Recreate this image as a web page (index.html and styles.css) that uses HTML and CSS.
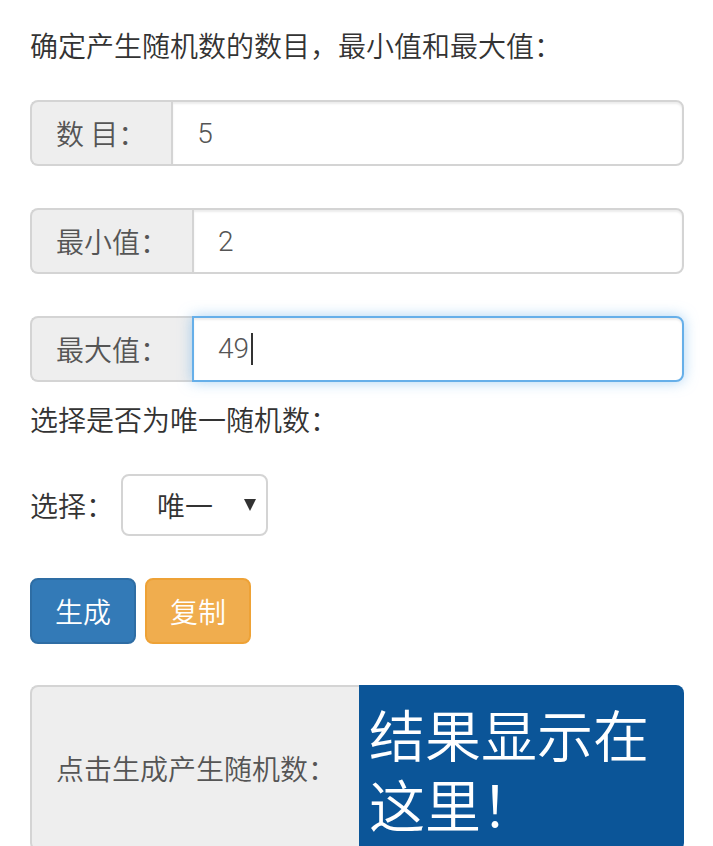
FILE: index.html
```html
<!DOCTYPE html>
<html lang="zh-CN">
<head>
<meta charset="utf-8">
<title>随机数生成</title>
<link rel="stylesheet" href="styles.css">
</head>
<body>
<div class="container">
  <p class="intro">确定产生随机数的数目，最小值和最大值：</p>

  <div class="input-group g1">
    <span class="addon">数 目：</span>
    <input class="form-control" type="text" value="5">
  </div>

  <div class="input-group g2">
    <span class="addon">最小值：</span>
    <input class="form-control" type="text" value="2">
  </div>

  <div class="input-group g3">
    <span class="addon">最大值：</span>
    <div class="form-control focused">49<span class="caret"></span></div>
  </div>

  <p class="label-line">选择是否为唯一随机数：</p>

  <div class="select-row">
    <span class="select-label">选择：</span>
    <span class="select-wrap">
      <select class="select">
        <option>唯一</option>
        <option>不唯一</option>
      </select>
    </span>
  </div>

  <div class="buttons">
    <button class="btn btn-primary" type="button">生成</button>
    <button class="btn btn-warning" type="button">复制</button>
  </div>

  <div class="result">
    <div class="result-label">点击生成产生随机数：</div>
    <div class="result-value">结果显示在这里！</div>
  </div>
</div>
</body>
</html>
```

FILE: styles.css
```css
html, body {
  margin: 0;
  padding: 0;
  background: #fff;
}

body {
  font-family: Roboto, "Noto Sans CJK SC", sans-serif;
  font-size: 28px;
  line-height: 40px;
  font-weight: 350;
  color: #333;
}

.container {
  padding: 28px 29px 0 30px;
}

.intro {
  margin: 0 0 32px 0;
}

.input-group {
  display: flex;
  height: 66px;
  margin-bottom: 42px;
}

.input-group.g3 {
  margin-bottom: 20px;
}

.addon {
  display: flex;
  align-items: center;
  box-sizing: border-box;
  padding: 0 24px 0 24px;
  background: #eee;
  border: 2px solid #d4d4d4;
  border-right: 0;
  border-radius: 8px 0 0 8px;
  color: #555;
  white-space: nowrap;
  font-family: "Noto Sans CJK SC", sans-serif;
  font-weight: 350;
}

.g1 .addon {
  padding-right: 25px;
}

.form-control {
  flex: 1;
  box-sizing: border-box;
  height: 66px;
  margin: 0;
  padding: 0 24px;
  border: 2px solid #d4d4d4;
  border-radius: 0 8px 8px 0;
  font-family: Roboto, "Noto Sans CJK SC", sans-serif;
  font-size: 28px;
  font-weight: 300;
  color: #555;
  background: #fff;
  outline: none;
  box-shadow: inset 0 2px 2px rgba(0, 0, 0, 0.075);
}

.form-control.focused {
  display: flex;
  align-items: center;
  border-color: #66afe9;
  box-shadow: inset 0 2px 2px rgba(0, 0, 0, 0.075), 0 0 14px rgba(102, 175, 233, 0.55);
}

.caret {
  display: inline-block;
  width: 2px;
  height: 32px;
  margin-left: 2px;
  background: #333;
}

.label-line {
  margin: 0 0 32px 0;
}

.select-row {
  display: flex;
  align-items: center;
  margin-bottom: 42px;
}

.select-label {
  font-family: "Noto Sans CJK SC", sans-serif;
  margin-right: 7px;
}

.select-wrap {
  position: relative;
  display: inline-block;
}

.select-wrap::after {
  content: "";
  position: absolute;
  right: 12px;
  top: 25px;
  border-left: 6px solid transparent;
  border-right: 6px solid transparent;
  border-top: 12px solid #333;
  pointer-events: none;
}

.select {
  appearance: none;
  -webkit-appearance: none;
  display: block;
  box-sizing: border-box;
  width: 147px;
  height: 62px;
  padding: 0 0 0 34px;
  border: 2px solid #d4d4d4;
  border-radius: 8px;
  background: #fff;
  font-family: "Noto Sans CJK SC", sans-serif;
  font-size: 28px;
  font-weight: 350;
  color: #333;
}

.buttons {
  display: flex;
  gap: 9px;
  margin-bottom: 41px;
}

.btn {
  box-sizing: border-box;
  height: 66px;
  padding: 0 23px;
  border: 2px solid transparent;
  border-radius: 8px;
  font-family: "Noto Sans CJK SC", sans-serif;
  font-size: 28px;
  font-weight: 350;
  line-height: 40px;
  color: #fff;
}

.btn-primary {
  background: #337ab7;
  border-color: #2e6da4;
}

.btn-warning {
  background: #f0ad4e;
  border-color: #eea236;
}

.result {
  display: flex;
}

.result-label {
  display: flex;
  align-items: center;
  box-sizing: border-box;
  padding: 0 23px 0 24px;
  background: #eee;
  border: 2px solid #d4d4d4;
  border-right: 0;
  border-radius: 8px 0 0 8px;
  color: #555;
  white-space: nowrap;
  font-family: "Noto Sans CJK SC", sans-serif;
  font-weight: 350;
}

.result-value {
  flex: 1;
  box-sizing: border-box;
  padding: 13px 12px 13px 10px;
  background: #0b5598;
  border-radius: 0 8px 8px 0;
  color: #fff;
  font-family: "Noto Sans CJK SC", sans-serif;
  font-size: 56px;
  line-height: 70px;
  font-weight: 350;
}
```
